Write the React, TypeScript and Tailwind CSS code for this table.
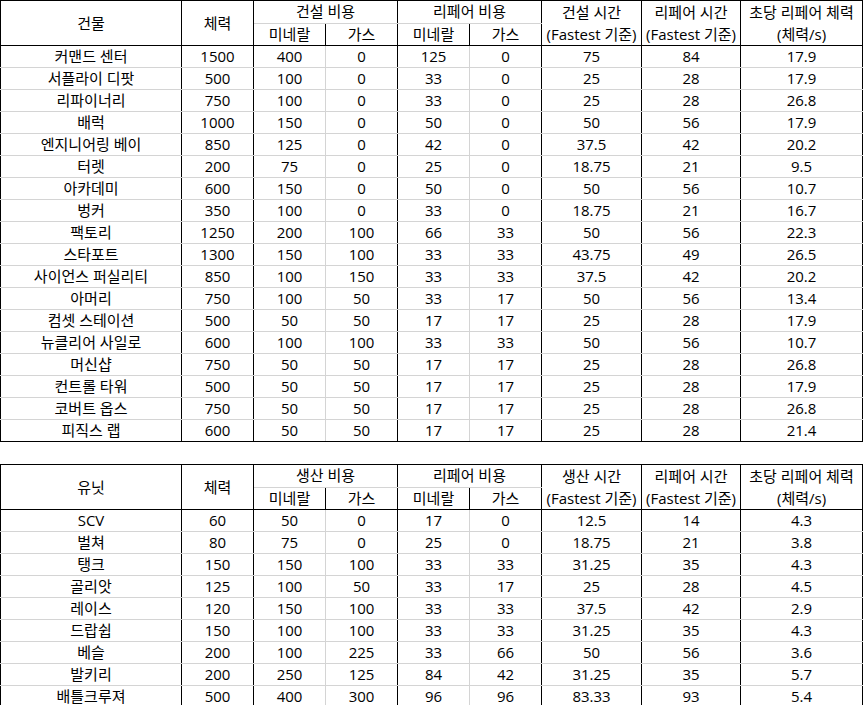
type Row = [string, ...(string | number)[]]

const buildings: Row[] = [
  ['커맨드 센터', 1500, 400, 0, 125, 0, 75, 84, '17.9'],
  ['서플라이 디팟', 500, 100, 0, 33, 0, 25, 28, '17.9'],
  ['리파이너리', 750, 100, 0, 33, 0, 25, 28, '26.8'],
  ['배럭', 1000, 150, 0, 50, 0, 50, 56, '17.9'],
  ['엔지니어링 베이', 850, 125, 0, 42, 0, 37.5, 42, '20.2'],
  ['터렛', 200, 75, 0, 25, 0, 18.75, 21, '9.5'],
  ['아카데미', 600, 150, 0, 50, 0, 50, 56, '10.7'],
  ['벙커', 350, 100, 0, 33, 0, 18.75, 21, '16.7'],
  ['팩토리', 1250, 200, 100, 66, 33, 50, 56, '22.3'],
  ['스타포트', 1300, 150, 100, 33, 33, 43.75, 49, '26.5'],
  ['사이언스 퍼실리티', 850, 100, 150, 33, 33, 37.5, 42, '20.2'],
  ['아머리', 750, 100, 50, 33, 17, 50, 56, '13.4'],
  ['컴셋 스테이션', 500, 50, 50, 17, 17, 25, 28, '17.9'],
  ['뉴클리어 사일로', 600, 100, 100, 33, 33, 50, 56, '10.7'],
  ['머신샵', 750, 50, 50, 17, 17, 25, 28, '26.8'],
  ['컨트롤 타워', 500, 50, 50, 17, 17, 25, 28, '17.9'],
  ['코버트 옵스', 750, 50, 50, 17, 17, 25, 28, '26.8'],
  ['피직스 랩', 600, 50, 50, 17, 17, 25, 28, '21.4'],
]

const units: Row[] = [
  ['SCV', 60, 50, 0, 17, 0, 12.5, 14, '4.3'],
  ['벌쳐', 80, 75, 0, 25, 0, 18.75, 21, '3.8'],
  ['탱크', 150, 150, 100, 33, 33, 31.25, 35, '4.3'],
  ['골리앗', 125, 100, 50, 33, 17, 25, 28, '4.5'],
  ['레이스', 120, 150, 100, 33, 33, 37.5, 42, '2.9'],
  ['드랍쉽', 150, 100, 100, 33, 33, 31.25, 35, '4.3'],
  ['베슬', 200, 100, 225, 33, 66, 50, 56, '3.6'],
  ['발키리', 200, 250, 125, 84, 42, 31.25, 35, '5.7'],
  ['배틀크루져', 500, 400, 300, 96, 96, 83.33, 93, '5.4'],
]

// right border per column: black on group edges, light grey inside a cost group
const rightBorder = [
  'border-r-black',
  'border-r-black',
  'border-r-[#d4d4d4]',
  'border-r-black',
  'border-r-[#d4d4d4]',
  'border-r-black',
  'border-r-black',
  'border-r-black',
  'border-r-black',
]

const widths = ['w-[181px]', 'w-[72px]', 'w-[72px]', 'w-[72px]', 'w-[72px]', 'w-[72px]', 'w-[100px]', 'w-[99px]', 'w-[122px]']

function DataTable({ first, cost, time, rows }: { first: string; cost: string; time: string; rows: Row[] }) {
  const head = 'border-r border-b border-r-black h-[21px] p-0 text-center font-normal leading-[21px]'
  const twoLine = 'border-r border-b border-r-black border-b-black p-0 text-center font-normal leading-[22px]'
  return (
    <table className="table-fixed border-collapse border-l border-t border-black w-[863px]">
      <colgroup>
        {widths.map((w, i) => (
          <col key={i} className={w} />
        ))}
      </colgroup>
      <thead>
        <tr>
          <th rowSpan={2} className={`${head} border-b-black`}>{first}</th>
          <th rowSpan={2} className={`${head} border-b-black`}>체력</th>
          <th colSpan={2} className={`${head} border-b-[#d4d4d4]`}>{cost}</th>
          <th colSpan={2} className={`${head} border-b-[#d4d4d4]`}>리페어 비용</th>
          <th rowSpan={2} className={twoLine}>
            {time}
            <br />
            (Fastest 기준)
          </th>
          <th rowSpan={2} className={twoLine}>
            리페어 시간
            <br />
            (Fastest 기준)
          </th>
          <th rowSpan={2} className={twoLine}>
            초당 리페어 체력
            <br />
            (체력/s)
          </th>
        </tr>
        <tr>
          <th className={`${head} border-b-black border-r-[#d4d4d4]`}>미네랄</th>
          <th className={`${head} border-b-black`}>가스</th>
          <th className={`${head} border-b-black border-r-[#d4d4d4]`}>미네랄</th>
          <th className={`${head} border-b-black`}>가스</th>
        </tr>
      </thead>
      <tbody>
        {rows.map((row, r) => (
          <tr key={r}>
            {row.map((cell, c) => (
              <td
                key={c}
                className={`h-[21px] p-0 text-center leading-[21px] border-r border-b ${rightBorder[c]} ${
                  r === rows.length - 1 ? 'border-b-black' : 'border-b-[#d4d4d4]'
                }`}
              >
                {cell}
              </td>
            ))}
          </tr>
        ))}
      </tbody>
    </table>
  )
}

export default function App() {
  return (
    <div className="w-[864px] h-[705px] overflow-hidden bg-white text-black text-[15px] font-['Open_Sans','Noto_Sans_CJK_KR',sans-serif]">
      <DataTable first="건물" cost="건설 비용" time="건설 시간" rows={buildings} />
      <div className="h-[22px]" />
      <DataTable first="유닛" cost="생산 비용" time="생산 시간" rows={units} />
    </div>
  )
}
